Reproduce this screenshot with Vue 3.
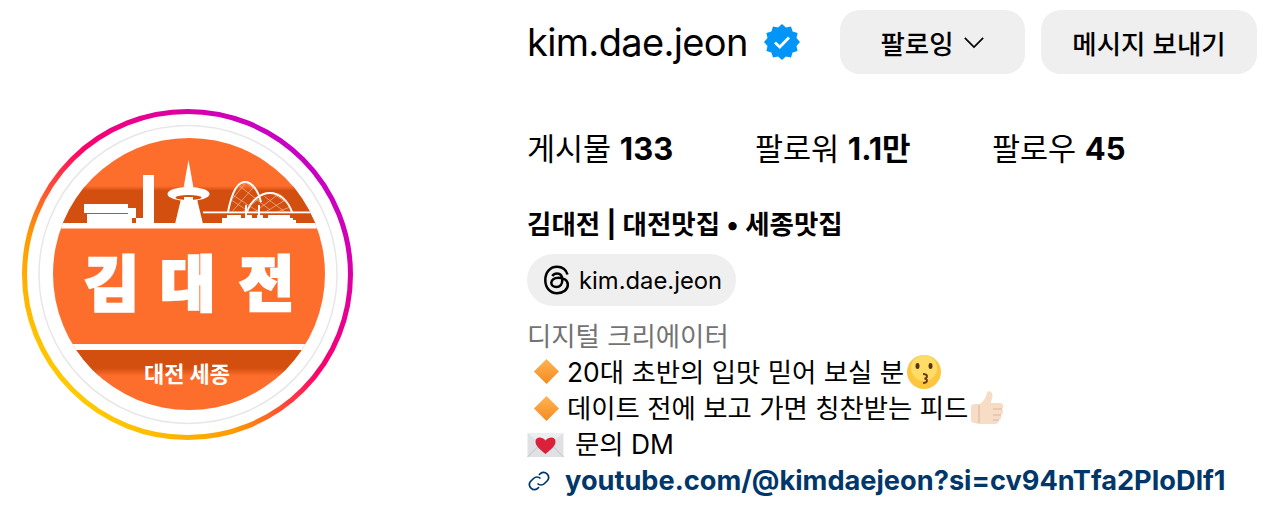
<script setup>
const stats = [
  { label: '게시물', value: '133' },
  { label: '팔로워', value: '1.1만' },
  { label: '팔로우', value: '45' }
]
const badgePoints = Array.from({ length: 24 }, (_, i) => {
  const r = i % 2 ? 15 : 18
  const a = (i * Math.PI) / 12 - Math.PI / 2
  return `${(18 + r * Math.cos(a)).toFixed(2)},${(18 + r * Math.sin(a)).toFixed(2)}`
}).join(' ')
</script>

<template>
  <main class="page">
    <section class="avatar-col">
      <svg class="avatar" viewBox="18 105 340 340" width="340" height="340">
        <defs>
          <linearGradient id="ring" x1="0.12" y1="0.92" x2="0.9" y2="0.1">
            <stop offset="0" stop-color="#ffd600" />
            <stop offset="0.28" stop-color="#ff9a00" />
            <stop offset="0.55" stop-color="#ff0069" />
            <stop offset="0.95" stop-color="#c700c7" />
          </linearGradient>
          <linearGradient id="topband" x1="0" y1="0" x2="0" y2="1">
            <stop offset="0" stop-color="#fd6e2c" />
            <stop offset="0.12" stop-color="#d34f10" />
            <stop offset="1" stop-color="#d34f10" />
          </linearGradient>
          <linearGradient id="lowband" x1="0" y1="0" x2="0" y2="1">
            <stop offset="0" stop-color="#d34f10" />
            <stop offset="0.7" stop-color="#d34f10" />
            <stop offset="1" stop-color="#fd6e2c" />
          </linearGradient>
          <linearGradient id="dia" x1="0" y1="0" x2="0" y2="1">
            <stop offset="0" stop-color="#ffb454" />
            <stop offset="1" stop-color="#f58a1f" />
          </linearGradient>
          <clipPath id="disc"><circle cx="189" cy="274" r="136" /></clipPath>
          <clipPath id="arcs">
            <path d="M229 212C233 190 239 182 245 182C252 182 257 190 260 200C265 195 271 193 275 193C282 193 289 200 292 212Z" />
          </clipPath>
        </defs>
        <circle cx="187.5" cy="274.5" r="163" fill="none" stroke="url(#ring)" stroke-width="5" />
        <circle cx="188" cy="274.5" r="149" fill="#fff" stroke="#e7e7e7" stroke-width="1.5" />
        <g clip-path="url(#disc)">
          <rect x="50" y="135" width="280" height="280" fill="#fd6e2c" />
          <rect x="50" y="186" width="280" height="38" fill="url(#topband)" />
          <rect x="50" y="223" width="280" height="5.500" fill="#fff" />
          <rect x="50" y="344" width="280" height="6.500" fill="#fff" />
          <rect x="50" y="350" width="280" height="26" fill="url(#lowband)" />
          <g fill="#fff">
            <rect x="84" y="204" width="44" height="9" />
            <rect x="87" y="214" width="41" height="10" />
            <path d="M128 208h8v10h-4v6h-4z" />
            <rect x="136" y="218" width="8" height="6" />
            <rect x="143" y="175" width="11" height="49" />
            <path d="M188.500 160L193.500 188H183.500Z" />
            <ellipse cx="188.500" cy="194" rx="21" ry="7" />
            <path d="M181 199H197L203 224H175Z" />
            <rect x="203" y="211.500" width="108" height="1.800" />
            <path d="M222 224v-6h5v-3h14v3h5v-3h6v3h5v-3h6v3h5v-3h22v3h3v2h3v4z" />
          </g>
          <ellipse cx="188.500" cy="197.500" rx="13" ry="2.600" fill="#d34f10" />
          <rect x="184" y="197" width="9" height="3.500" fill="#fff" />
          <g fill="none" stroke="#fff">
            <path d="M228 212C232 191 238 182 245 182C252 182 258 190 261 202" stroke-width="2" />
            <path d="M247 212C251 200 261 193 270 193C280 193 288 201 292 212" stroke-width="2" />
          </g>
          <g clip-path="url(#arcs)" stroke="#f8c9ac" stroke-width="0.600">
            <path d="M225 190L262 214M225 196L262 220M232 180L270 210M240 178L285 212M252 180L295 208M262 184L300 206M225 208L248 180M230 214L258 182M240 214L272 188M252 214L284 190M262 214L292 196M272 214L298 204" />
          </g>
          <rect x="245" y="205" width="2" height="19" fill="#fff" />
          <rect x="258" y="205" width="2" height="19" fill="#fff" />
          <text class="logo-big" y="306">
            <tspan x="84">김</tspan><tspan x="160">대</tspan><tspan x="239">전</tspan>
          </text>
          <text class="logo-small" x="187" y="382">대전 세종</text>
        </g>
      </svg>
    </section>

    <section class="info">
      <header class="top">
        <h1 class="name">kim.dae.jeon</h1>
        <svg class="badge" viewBox="0 0 36 36" width="36" height="36">
          <polygon :points="badgePoints" fill="#0095f6" />
          <path d="M11 18.500L15.800 23L25 13.500" fill="none" stroke="#fff" stroke-width="2.800" />
        </svg>
        <button class="btn follow">
          <span>팔로잉</span>
          <svg viewBox="0 0 24 14" width="22" height="13">
            <path d="M2 2L12 12L22 2" fill="none" stroke="#000" stroke-width="1.800" />
          </svg>
        </button>
        <button class="btn message">메시지 보내기</button>
      </header>

      <ul class="stats">
        <li v-for="s in stats" :key="s.label" class="stat">{{ s.label }} <b>{{ s.value }}</b></li>
      </ul>

      <div class="full-name">김대전 | 대전맛집 • 세종맛집</div>

      <div class="chip">
        <svg viewBox="0 0 28 30" width="28" height="30">
          <path d="M24.500 9.500C23 4.500 19 1.800 14 1.800C6.800 1.800 2.300 7.500 2.300 15C2.300 22.500 6.800 28.200 14 28.200C20.500 28.200 24.800 24.500 24.800 19.800C24.800 15.200 20.800 12.800 15.500 12.800C11 12.800 8.300 14.800 8.300 17.800C8.300 20.300 10.500 22 13.300 22C17 22 19.300 19.300 19.300 15C19.300 10.800 17.300 8.500 14 8.500C11.800 8.500 10.300 9.500 9.300 11" fill="none" stroke="#000" stroke-width="2.500" />
        </svg>
        <span>kim.dae.jeon</span>
      </div>

      <div class="bio">
        <div class="category">디지털 크리에이터</div>
        <div class="line indent">
          <svg class="emoji diamond" viewBox="0 0 28 28"><path d="M14 1L27 14L14 27L1 14Z" fill="url(#dia)" /></svg>
          <span>20대 초반의 입맛 믿어 보실 분</span>
          <svg class="emoji face" viewBox="0 0 36 36">
            <circle cx="18" cy="18" r="17" fill="#fcc63f" />
            <circle cx="18" cy="14" r="13" fill="#ffdc66" />
            <ellipse cx="11.500" cy="12" rx="2" ry="3" fill="#553311" />
            <ellipse cx="24.500" cy="12" rx="2" ry="3" fill="#553311" />
            <path d="M17 20C22 20 22 24 18.500 24.500C22 25 22 29 17 29" fill="none" stroke="#6b3a12" stroke-width="2" />
          </svg>
        </div>
        <div class="line indent">
          <svg class="emoji diamond" viewBox="0 0 28 28"><path d="M14 1L27 14L14 27L1 14Z" fill="url(#dia)" /></svg>
          <span>데이트 전에 보고 가면 칭찬받는 피드</span>
          <svg class="emoji thumb" viewBox="0 0 36 36">
            <path d="M2 17C2 15 4 14 6 14H11C15 11 17 7 18 3C19 0 24 1 23.500 6C23 9 22 11 22 13H31C35 13 35 18 33 19C35 21 34 24 32 25C33 27 32 30 30 30C30 33 28 34 26 34H10C8 34 7 33 6 33C3 33 2 32 2 30Z" fill="#f7dcc6" />
            <path d="M10 15V33M24 19H33M24 25H32M24 30H30" fill="none" stroke="#d9b59b" stroke-width="1" />
          </svg>
        </div>
        <div class="line">
          <svg class="emoji letter" viewBox="0 0 36 24">
            <rect x="0" y="0" width="36" height="24" fill="#dfe1e4" />
            <path d="M0 0L18 14L36 0" fill="#eceef0" />
            <path d="M0 24L13 11M36 24L23 11" stroke="#bfc2c6" stroke-width="1" />
            <path d="M18 21C12 16 8 13 8 8.500C8 4 14 3 18 7.500C22 3 28 4 28 8.500C28 13 24 16 18 21Z" fill="#d9213a" />
          </svg>
          <span>문의 DM</span>
        </div>
        <div class="line link">
          <svg class="link-icon" viewBox="0 0 24 24" width="24" height="24">
            <path d="M10.500 14.500a5 5 0 0 0 7 0l3-3a5 5 0 0 0-7-7l-1.500 1.500M13.500 9.500a5 5 0 0 0-7 0l-3 3a5 5 0 0 0 7 7l1.500-1.500" fill="none" stroke="#00376b" stroke-width="1.700" />
          </svg>
          <a>youtube.com/@kimdaejeon?si=cv94nTfa2PIoDlf1</a>
        </div>
      </div>
    </section>
  </main>
</template>

<style>
html, body { margin: 0; background: #fff; }
</style>

<style scoped>
.page {
  display: flex;
  width: 1264px;
  height: 512px;
  overflow: hidden;
  font-family: Inter, "Noto Sans CJK KR", sans-serif;
  color: #000;
}
.avatar-col {
  width: 527px;
  flex: none;
  padding: 105px 0 0 18px;
  box-sizing: border-box;
}
.avatar { display: block; }
.logo-big {
  font-family: "Noto Sans CJK KR", sans-serif;
  font-weight: 900;
  font-size: 60px;
  fill: #fff;
  stroke: #fff;
  stroke-width: 2.500px;
}
.logo-small {
  font-family: "Noto Sans CJK KR", sans-serif;
  font-weight: 700;
  font-size: 22px;
  fill: #fff;
  text-anchor: middle;
}
.info { flex: 1; min-width: 0; }
.top {
  display: flex;
  align-items: center;
  height: 64px;
  margin-top: 10px;
}
.name {
  margin: 0;
  font-size: 38px;
  font-weight: 400;
  letter-spacing: -0.660px;
  line-height: 64px;
  width: 221px;
}
.badge { margin-left: 16px; }
.btn {
  height: 64px;
  border: 0;
  border-radius: 20px;
  background: #efefef;
  font: 500 26.500px Inter, "Noto Sans CJK KR", sans-serif;
  color: #000;
  display: flex;
  align-items: center;
  justify-content: center;
  padding: 0;
}
.follow { width: 185px; margin-left: 40px; gap: 9px; }
.message { width: 216px; margin-left: 16px; }
.stats {
  list-style: none;
  margin: 55px 0 0;
  padding: 0;
  display: flex;
  font-size: 30.500px;
  line-height: 40px;
  height: 40px;
}
.stat:nth-child(1) { width: 228px; }
.stat:nth-child(2) { width: 237px; }
.stat b { font-weight: 700; font-size: 31px; }
.full-name {
  margin-top: 35px;
  font-size: 26.500px;
  font-weight: 700;
  line-height: 40px;
}
.chip {
  display: inline-flex;
  align-items: center;
  gap: 8px;
  height: 52px;
  margin-top: 10px;
  padding: 0 14px 0 16px;
  border-radius: 26px;
  background: #efefef;
  font-size: 23.800px;
}
.bio { font-size: 26.400px; line-height: 36.300px; margin-top: 11.500px; }
.category { color: #737373; }
.line { display: flex; align-items: center; height: 36.300px; white-space: nowrap; }
.indent { padding-left: 6px; }
.emoji { display: block; flex: none; }
.diamond { width: 27px; height: 27px; margin-right: 7px; }
.face { width: 36px; height: 36px; margin-left: 2px; }
.thumb { width: 36px; height: 36px; margin-left: 1px; }
.letter { width: 37px; height: 24px; margin-right: 11px; }
.link { font-weight: 700; font-size: 27.200px; color: #00376b; }
.link-icon { margin-right: 14px; flex: none; }
</style>
